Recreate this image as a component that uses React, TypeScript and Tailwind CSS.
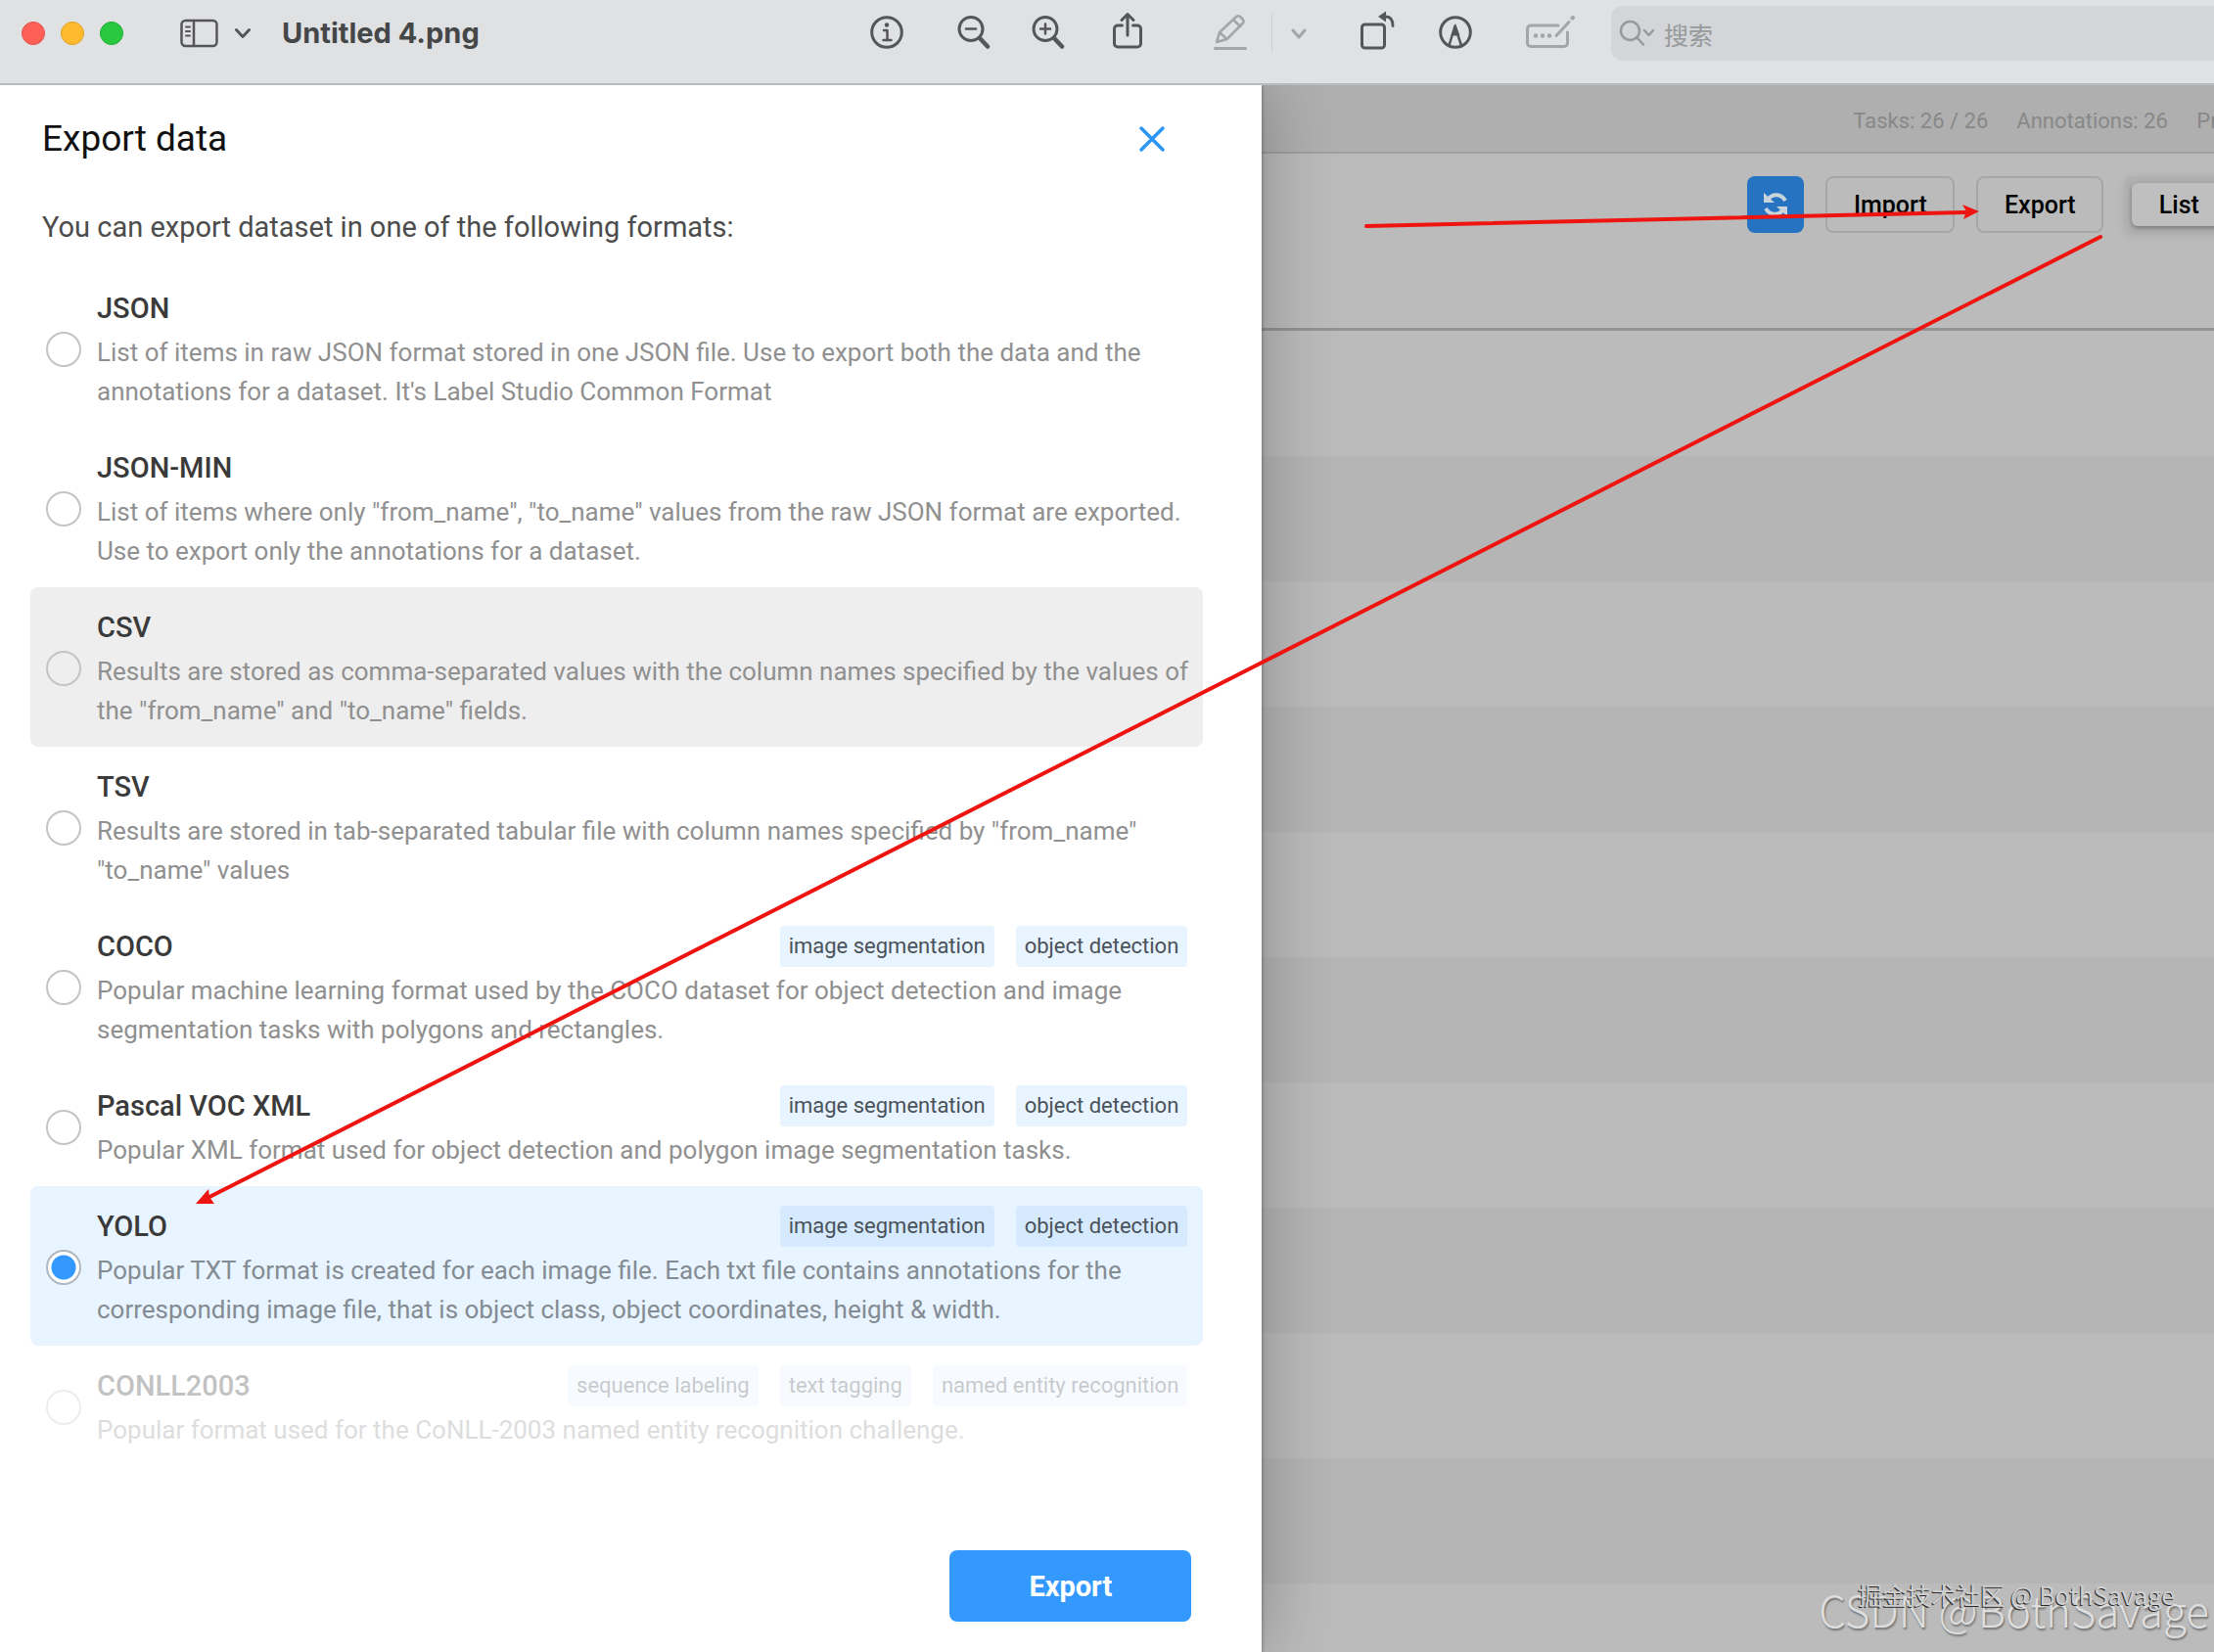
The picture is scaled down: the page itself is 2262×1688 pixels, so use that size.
import React, { useState } from "react";

type Format = { name: string; text: string; tags?: string[]; faded?: boolean; hovered?: boolean };

const formats: Format[] = [
  {
    name: "JSON",
    text: "List of items in raw JSON format stored in one JSON file. Use to export both the data and the annotations for a dataset. It's Label Studio Common Format",
  },
  {
    name: "JSON-MIN",
    text: 'List of items where only "from_name", "to_name" values from the raw JSON format are exported. Use to export only the annotations for a dataset.',
  },
  {
    name: "CSV",
    text: 'Results are stored as comma-separated values with the column names specified by the values of the "from_name" and "to_name" fields.',
    hovered: true,
  },
  {
    name: "TSV",
    text: 'Results are stored in tab-separated tabular file with column names specified by "from_name" "to_name" values',
  },
  {
    name: "COCO",
    text: "Popular machine learning format used by the COCO dataset for object detection and image segmentation tasks with polygons and rectangles.",
    tags: ["image segmentation", "object detection"],
  },
  {
    name: "Pascal VOC XML",
    text: "Popular XML format used for object detection and polygon image segmentation tasks.",
    tags: ["image segmentation", "object detection"],
  },
  {
    name: "YOLO",
    text: "Popular TXT format is created for each image file. Each txt file contains annotations for the corresponding image file, that is object class, object coordinates, height & width.",
    tags: ["image segmentation", "object detection"],
  },
  {
    name: "CONLL2003",
    text: "Popular format used for the CoNLL-2003 named entity recognition challenge.",
    tags: ["sequence labeling", "text tagging", "named entity recognition"],
    faded: true,
  },
];

function Option({ format, checked, onSelect }: { format: Format; checked: boolean; onSelect: () => void }) {
  const ground = checked ? "bg-[#e8f4ff]" : format.hovered ? "bg-[#eeeeee]" : "";
  return (
    <label
      className={`flex items-center gap-4 rounded-lg pt-5 pr-1 pb-[17px] pl-4 ${ground} ${format.faded ? "opacity-30" : ""}`}
    >
      <input
        type="radio"
        name="format"
        checked={checked}
        onChange={onSelect}
        className="size-9 shrink-0 appearance-none rounded-full border-2 border-[#c4c4c4] bg-transparent checked:border-[#b0b8c0] checked:bg-[radial-gradient(circle,#3399ff_12px,#ffffff_13px)]"
      />
      <span className="flex min-w-0 flex-1 flex-col gap-1">
        <span className="flex items-center justify-between pr-3">
          <span className="text-[29px] leading-[42px] font-medium text-[#3a3a3a]">{format.name}</span>
          <span className="flex gap-[22px]">
            {format.tags?.map((tag) => (
              <span
                key={tag}
                className={`rounded px-[9px] text-[22px] leading-[42px] text-[#4a525a] ${checked ? "bg-[#d6eaff]" : "bg-[#e8f4ff]"}`}
              >
                {tag}
              </span>
            ))}
          </span>
        </span>
        <span className={`text-[26px] leading-10 ${checked ? "text-[#848c93]" : "text-[#909090]"}`}>{format.text}</span>
      </span>
    </label>
  );
}

function ToolIcon({ label, box, className, children }: { label: string; box: string; className: string; children: React.ReactNode }) {
  return (
    <button type="button" aria-label={label} className={`shrink-0 ${className}`}>
      <svg viewBox={box} className="block w-full" fill="none" stroke="currentColor" strokeWidth="3" strokeLinecap="round" strokeLinejoin="round">
        {children}
      </svg>
    </button>
  );
}

function TitleBar() {
  return (
    <header className="relative z-10 flex h-[87px] shrink-0 items-start overflow-hidden border-b-2 border-[#b9babb] bg-[#e0e1e3] text-[#555658]">
      <div className="flex h-[68px] w-[889px] shrink-0 items-center pl-[22px]">
        <div className="flex gap-4">
          <button type="button" aria-label="Close window" className="size-6 rounded-full border border-[#e0524c] bg-[#fe5f57]" />
          <button type="button" aria-label="Minimize window" className="size-6 rounded-full border border-[#dfa023] bg-[#febb2e]" />
          <button type="button" aria-label="Zoom window" className="size-6 rounded-full border border-[#1fae33] bg-[#28c840]" />
        </div>
        <ToolIcon label="Sidebar" box="0 0 40 30" className="ml-[58px] w-10">
          <rect x="1.5" y="2" width="36" height="26" rx="4" strokeWidth="2.500" />
          <path d="M14 2v26" strokeWidth="2.500" />
          <path d="M6 8.500h4M6 13h4M6 17.500h4" strokeWidth="2" />
        </ToolIcon>
        <ToolIcon label="Sidebar options" box="0 0 18 12" className="ml-[15px] w-[18px]">
          <path d="M2.500 2.500l6.500 7 6.500-7" />
        </ToolIcon>
        <h1 className="ml-[31px] font-[Inter,'Liberation_Sans',sans-serif] text-[29px] leading-9 font-bold text-[#454648]">Untitled 4.png</h1>
      </div>
      <div className="flex h-[66px] w-[757px] shrink-0 items-center">
        <ToolIcon label="Info" box="0 0 34 34" className="w-[34px]">
          <circle cx="17" cy="17" r="15.300" />
          <circle cx="17" cy="9.500" r="2.200" fill="currentColor" stroke="none" />
          <path d="M14 15h3.500v9.500M13.500 25h8" strokeWidth="2.500" />
        </ToolIcon>
        <ToolIcon label="Zoom out" box="0 0 34 34" className="ml-[55px] w-[34px]">
          <circle cx="14" cy="13.500" r="12" />
          <path d="M9 13.500h10" strokeWidth="2.500" />
          <path d="M23 23l8 8.500" strokeWidth="4.500" />
        </ToolIcon>
        <ToolIcon label="Zoom in" box="0 0 34 34" className="ml-[42px] w-[34px]">
          <circle cx="14" cy="13.500" r="12" />
          <path d="M9 13.500h10M14 8.500v10" strokeWidth="2.500" />
          <path d="M23 23l8 8.500" strokeWidth="4.500" />
        </ToolIcon>
        <ToolIcon label="Share" box="0 0 30 38" className="mb-1 ml-[49px] w-[30px]">
          <path d="M9.500 14H5a3.500 3.500 0 0 0-3.500 3.500v15A3.500 3.500 0 0 0 5 36h20a3.500 3.500 0 0 0 3.500-3.500v-15A3.500 3.500 0 0 0 25 14h-4.500" />
          <path d="M15 24V3M9 8.500L15 2.500l6 6" />
        </ToolIcon>
        <ToolIcon label="Highlight" box="0 0 34 38" className="ml-[73px] w-[34px] text-[#a4a5a7]">
          <path d="M1.500 35.500h31" />
          <path d="M3 29l3-10L22.500 3.500c1.500-1.500 3-1.500 4.500-.5l2.500 2.500c1.500 1.500 1.500 3 0 4.500L13.500 26z M6 19l7.500 7M20 6l7 7" strokeWidth="2.500" />
          <path d="M2 30l2-5 3.500 3.500z" fill="currentColor" stroke="none" />
        </ToolIcon>
        <span className="ml-[25px] h-10 w-px bg-[#cccdcf]" />
        <ToolIcon label="Highlight colors" box="0 0 18 12" className="mt-1 ml-[18px] w-[18px] text-[#a4a5a7]">
          <path d="M3 2l6 7 6-7" />
        </ToolIcon>
        <ToolIcon label="Rotate" box="0 0 36 40" className="mb-1 ml-[54px] w-9">
          <rect x="1.500" y="14" width="23" height="24" rx="3" />
          <path d="M24 6h2c4 0 7 3 7 9.500" strokeWidth="2.800" />
          <path d="M18 6l8-5.500v11z" fill="currentColor" stroke="none" />
        </ToolIcon>
        <ToolIcon label="Markup" box="0 0 34 34" className="ml-11 w-[34px]">
          <circle cx="17" cy="17" r="15.300" />
          <path d="M10.500 30.500l6-20 6.500 20" strokeWidth="2.500" />
          <path d="M17 8l4.500 12.500h-9z" fill="currentColor" stroke="none" />
        </ToolIcon>
        <ToolIcon label="Fill form" box="0 0 50 34" className="ml-[55px] w-[50px] text-[#a4a5a7]">
          <path d="M33 10H5a3.500 3.500 0 0 0-3.500 3.500v14.500A3.500 3.500 0 0 0 5 31.500h34a3.500 3.500 0 0 0 3.500-3.500V17" />
          <path d="M31 20.500L44 6.500" />
          <path d="M47.500 2.500l.5-.5" strokeWidth="4" />
          <path d="M10 20.500h.1M17 20.500h.1M24 20.500h.1" strokeWidth="4.500" />
        </ToolIcon>
      </div>
      <label className="mt-1.5 flex h-14 min-w-0 flex-1 items-center rounded-l-xl bg-[#d3d5d8] pl-2 text-[#97999b]">
        <svg viewBox="0 0 38 28" className="w-[38px] shrink-0" fill="none" stroke="currentColor" strokeWidth="2.500" strokeLinecap="round" strokeLinejoin="round" aria-hidden="true">
          <circle cx="11.500" cy="11.500" r="9.500" />
          <path d="M18.500 18.500l6.500 7M26 11l4.500 5 4.500-5" />
        </svg>
        <input
          type="search"
          placeholder="搜索"
          aria-label="搜索"
          className="ml-2 min-w-0 flex-1 bg-transparent pt-0.5 font-['Noto_Sans_CJK_SC',sans-serif] text-[25px] leading-9 outline-none placeholder:text-[#97999b]"
        />
      </label>
    </header>
  );
}

function DataManager() {
  return (
    <main className="flex min-w-0 flex-1 flex-col overflow-hidden bg-[#bbbbbb]">
      <div className="flex h-[70px] shrink-0 items-center border-b-2 border-[#a0a0a0] bg-[#afafaf] pt-[5px] pl-[604px] text-[22px] whitespace-nowrap text-[#888888]">
        <span className="w-[167px] shrink-0">Tasks: 26 / 26</span>
        <span className="w-[184px] shrink-0">Annotations: 26</span>
        <span className="shrink-0">Predictions: 0</span>
      </div>
      <div className="flex h-[181px] shrink-0 items-start gap-[22px] border-b-[3px] border-[#939393] pt-[23px] pl-[496px] text-[25px] font-medium text-black">
        <button type="button" aria-label="Refresh" className="flex size-[58px] shrink-0 items-center justify-center rounded-lg bg-[#2673c2]">
          <svg viewBox="0 0 26 28" className="w-[26px]" fill="none" stroke="#c9d3dc" strokeWidth="4" aria-hidden="true">
            <path d="M5 9c5-7 14-6 18 1M21 19c-5 7-14 6-18-1" />
            <path d="M1 2v10h11zM25 26V16H14z" fill="#c9d3dc" stroke="none" />
          </svg>
        </button>
        <button type="button" className="h-[58px] w-[132px] shrink-0 rounded-lg border-2 border-[#a6a6a6] pt-0.5">Import</button>
        <button type="button" className="h-[58px] w-[130px] shrink-0 rounded-lg border-2 border-[#a6a6a6] pt-0.5">Export</button>
        <div className="flex h-[58px] w-[240px] shrink-0 rounded-lg bg-[#b0b0b0] p-[7px] shadow-[0_2px_8px_rgba(0,0,0,0.1)]">
          <button type="button" className="w-24 rounded-md bg-[#bfbfbf] pt-0.5 shadow-[0_2px_5px_rgba(0,0,0,0.35)]">List</button>
        </div>
      </div>
      {Array.from({ length: 11 }, (_, i) => (
        <div key={i} className="h-32 shrink-0 odd:bg-[#bbbbbb] even:bg-[#b5b5b5]" />
      ))}
    </main>
  );
}

function ExportDialog() {
  const [selected, setSelected] = useState("YOLO");
  return (
    <section
      role="dialog"
      aria-label="Export data"
      className="relative flex w-[57%] shrink-0 flex-col bg-white pr-[60px] pl-[31px] shadow-[0_0_4px_rgba(0,0,0,0.4),0_0_70px_rgba(0,0,0,0.28)]"
    >
      <div className="mt-[33px] flex h-11 items-center justify-between pr-[37px] pl-3">
        <h2 className="text-[37px] leading-11 text-[#111111]">Export data</h2>
        <button type="button" aria-label="Close" className="w-[30px] text-[#2b95f5]">
          <svg viewBox="0 0 30 30" className="block w-full" fill="none" stroke="currentColor" strokeWidth="3.500" strokeLinecap="round">
            <path d="M4 4l22 22M26 4L4 26" />
          </svg>
        </button>
      </div>
      <p className="mt-12 mb-[22px] pl-3 text-[29px] leading-10 text-[#4c4c4c]">You can export dataset in one of the following formats:</p>
      <div className="flex flex-col">
        {formats.map((f) => (
          <Option key={f.name} format={f} checked={selected === f.name} onSelect={() => setSelected(f.name)} />
        ))}
      </div>
      <button
        type="button"
        className="mt-auto mr-3 mb-[31px] h-[73px] w-[247px] self-end rounded-lg bg-[#3399ff] pt-0.5 text-[29px] font-bold text-white"
      >
        Export
      </button>
    </section>
  );
}

export default function App() {
  return (
    <div className="relative flex h-screen flex-col overflow-hidden font-[Roboto,'Noto_Sans_CJK_SC',sans-serif]">
      <TitleBar />
      <div className="flex min-h-0 flex-1 flex-row-reverse">
        <DataManager />
        <ExportDialog />
      </div>
      <svg viewBox="0 0 2262 1688" className="pointer-events-none absolute inset-0 z-20 w-full" fill="none" stroke="#ee1410" strokeWidth="4" strokeLinecap="round" aria-hidden="true">
        <path d="M1396 231L2008 217M2146 242L214 1223" />
        <path d="M2022 216l-17-7 4 7-3 8zM200 1230l13-15 1 8 5 7z" fill="#ee1410" stroke="none" />
      </svg>
      <div className="pointer-events-none absolute right-[5px] bottom-3 z-20 font-['Noto_Sans_CJK_SC',sans-serif] text-[44px] leading-[64px] font-light whitespace-nowrap text-[#dedede] [text-shadow:1px_2px_2px_rgba(0,0,0,0.4)]">
        CSDN @BothSavage
      </div>
      <div className="pointer-events-none absolute right-10 bottom-[41px] z-20 font-['Noto_Sans_CJK_SC',sans-serif] text-[25px] leading-9 whitespace-nowrap text-[#cfcfcf] [text-shadow:-1px_1px_0_#2a2a2a]">
        掘金技术社区 @ BothSavage
      </div>
    </div>
  );
}
